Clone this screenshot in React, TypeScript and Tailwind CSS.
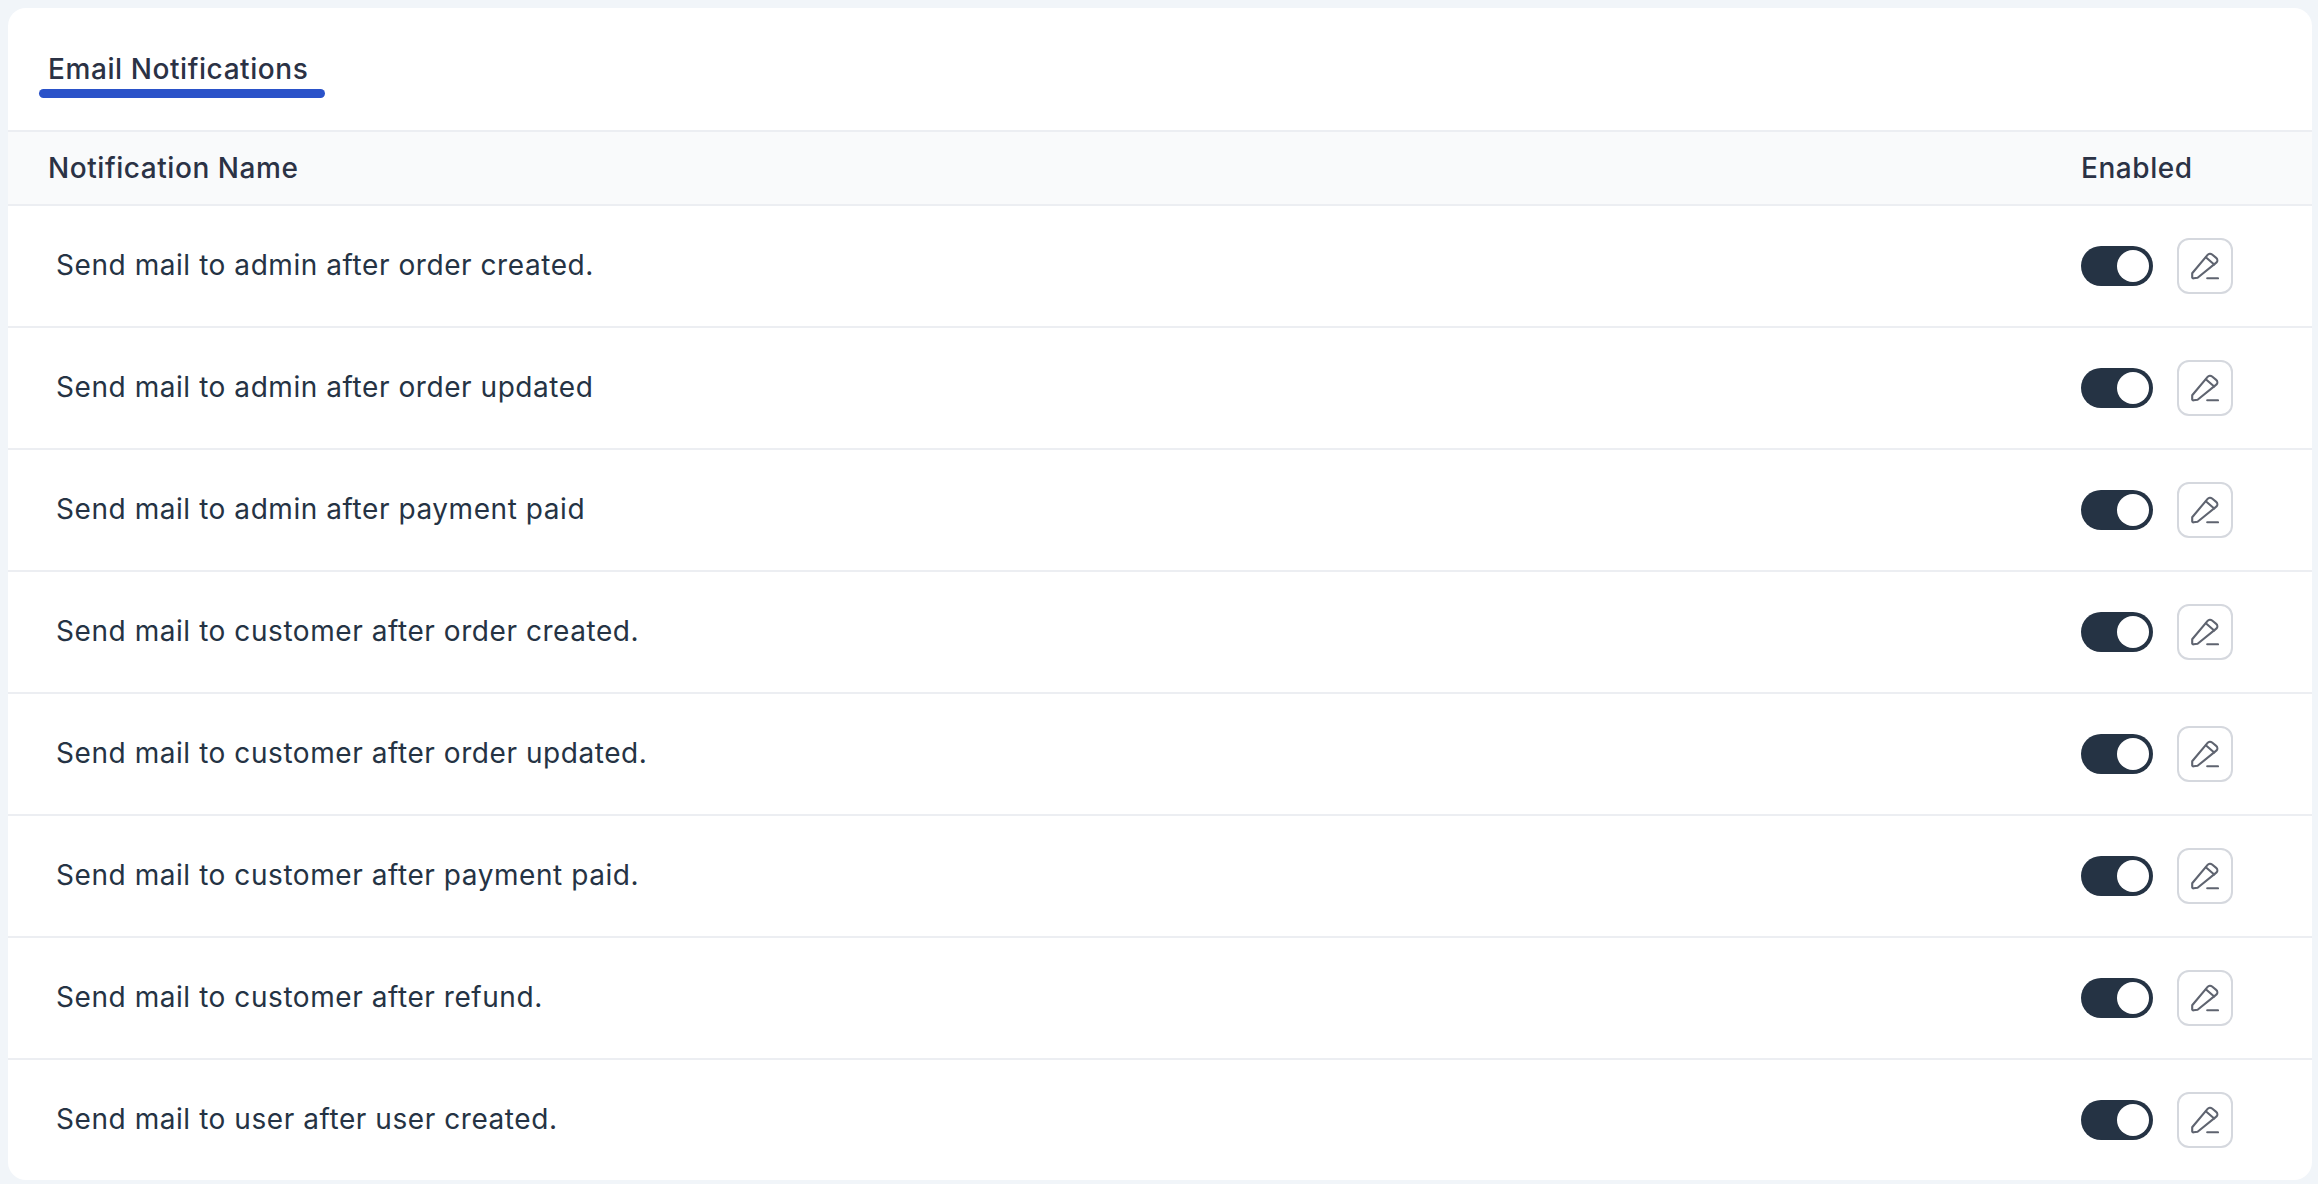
const rows = [
  "Send mail to admin after order created.",
  "Send mail to admin after order updated",
  "Send mail to admin after payment paid",
  "Send mail to customer after order created.",
  "Send mail to customer after order updated.",
  "Send mail to customer after payment paid.",
  "Send mail to customer after refund.",
  "Send mail to user after user created.",
];

const EditIcon = () => (
  <svg width="28" height="28" viewBox="0 0 28 28" fill="none" stroke="#5f6470" strokeWidth="2.1" strokeLinecap="round" strokeLinejoin="round">
    <path d="M1.2 21.2 16.6 2.9a3.2 3.2 0 0 1 4.5-.4l4.1 3.4a3.2 3.2 0 0 1 .4 4.5L6.6 25.8 2.6 26.3a1.2 1.2 0 0 1-1.4-1.4z" />
    <path d="M14.8 5.2 23.2 12.5" />
    <path d="M16.2 26.3H27" />
  </svg>
);

const Toggle = () => (
  <div className="flex h-[40px] w-[72px] items-center justify-end rounded-full bg-[#253344] pr-[4px]">
    <div className="h-[32px] w-[32px] rounded-full bg-white" />
  </div>
);

export default function App() {
  return (
    <div className="h-[1184px] w-[2318px] overflow-hidden bg-[#f1f5f9] pt-[8px] pl-[8px] pr-[6px] pb-[4px] font-['Inter',sans-serif] tracking-[0.56px]">
      <div className="flex h-full flex-col overflow-hidden rounded-[18px] bg-white">
        <div className="h-[124px] shrink-0 border-b-2 border-[#eceef2] pl-[31px] pt-[41px]">
          <div className="h-[40px] pl-[9px] text-[28px] leading-[40px] font-medium tracking-[0.58px] text-[#2b3245]">Email Notifications</div>
          <div className="h-[9px] w-[286px] rounded-full bg-[#2a52c9]" />
        </div>
        <div className="flex h-[74px] shrink-0 items-center justify-between border-b-2 border-[#eceef2] bg-[#f9fafb] pl-[40px]">
          <span className="text-[28px] font-medium text-[#2b3245]">Notification Name</span>
          <span className="w-[231px] text-[28px] font-medium text-[#2b3245]">Enabled</span>
        </div>
        {rows.map((r) => (
          <div key={r} className="flex h-[122px] shrink-0 items-center justify-between border-b-2 border-[#eceef2] pl-[48px]">
            <span className="mb-[2px] text-[28px] text-[#253344]">{r}</span>
            <div className="flex w-[231px] items-center gap-[24px]">
              <Toggle />
              <div className="flex h-[56px] w-[56px] items-center justify-center rounded-[12px] border-2 border-[#d5d8de]">
                <EditIcon />
              </div>
            </div>
          </div>
        ))}
      </div>
    </div>
  );
}
